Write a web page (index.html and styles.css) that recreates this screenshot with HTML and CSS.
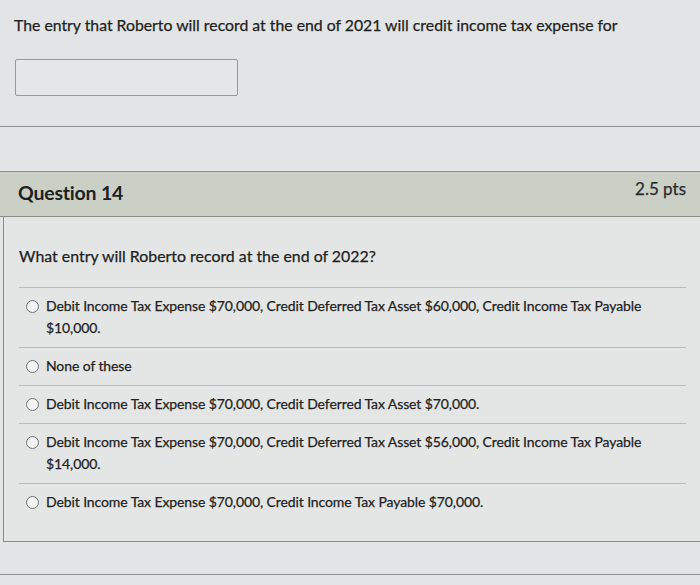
FILE: index.html
```html
<!DOCTYPE html>
<html>
<head>
<meta charset="utf-8">
<link rel="stylesheet" href="styles.css">
</head>
<body>
<div class="prev">
  <p class="prev-text">The entry that Roberto will record at the end of 2021 will credit income tax expense for</p>
  <div class="answer-box"></div>
</div>
<div class="divider"></div>
<div class="card">
  <div class="card-header">
    <span class="q-title">Question 14</span>
    <span class="q-pts">2.5 pts</span>
  </div>
  <div class="card-body">
    <p class="q-text">What entry will Roberto record at the end of 2022?</p>
    <ul class="answers">
      <li class="answer"><span class="radio"></span><span class="a-text">Debit Income Tax Expense $70,000, Credit Deferred Tax Asset $60,000, Credit Income Tax Payable $10,000.</span></li>
      <li class="answer"><span class="radio"></span><span class="a-text">None of these</span></li>
      <li class="answer"><span class="radio"></span><span class="a-text">Debit Income Tax Expense $70,000, Credit Deferred Tax Asset $70,000.</span></li>
      <li class="answer"><span class="radio"></span><span class="a-text">Debit Income Tax Expense $70,000, Credit Deferred Tax Asset $56,000, Credit Income Tax Payable $14,000.</span></li>
      <li class="answer"><span class="radio"></span><span class="a-text">Debit Income Tax Expense $70,000, Credit Income Tax Payable $70,000.</span></li>
    </ul>
  </div>
</div>
<div class="next-line"></div>
</body>
</html>
```
FILE: styles.css
```css
html, body {
  margin: 0;
  padding: 0;
}
body {
  background: #e2e4e6;
  font-family: Lato, "Open Sans", sans-serif;
  color: #1e1f21;
  width: 700px;
  height: 585px;
  overflow: hidden;
  -webkit-text-stroke: 0.25px currentColor;
}
.prev {
  padding: 15px 0 0 14px;
  height: 111px;
  box-sizing: border-box;
}
.prev-text {
  margin: 0;
  font-size: 15.8px;
  line-height: 20px;
}
.answer-box {
  margin: 24px 0 0 1px;
  width: 221px;
  height: 35px;
  border: 1px solid #96989b;
  border-radius: 2px;
  background: #e4e6e8;
}
.divider {
  margin-top: 15px;
  border-top: 1px solid #8d9092;
  height: 44px;
  background: #e3e5e6;
}
.card {
  margin-left: 3px;
  border-left: 1px solid #8a8c8c;
  border-bottom: 1px solid #8a8c8c;
  background: #e4e6e6;
}
.card-header {
  display: flex;
  justify-content: space-between;
  align-items: center;
  height: 44px;
  border-top: 1px solid #8a8e8a;
  border-bottom: 1px solid #8a8e8a;
  margin-left: -4px;
  padding: 0 14px 0 18px;
  background: #cbd0c6;
}
.q-title {
  font-size: 19.5px;
  font-weight: 700;
  letter-spacing: -0.2px;
  -webkit-text-stroke: 0;
  margin-top: -3px;
}
.q-pts {
  font-size: 17px;
  color: #2a2b2d;
  margin-top: -11px;
}
.card-body {
  padding: 29px 14px 20px 15px;
}
.q-text {
  margin: 0;
  font-size: 15.9px;
  line-height: 20px;
}
.answers {
  list-style: none;
  margin: 21px 0 0 0;
  padding: 0;
  border-top: 1px solid #b9bcbe;
}
.answer {
  display: flex;
  align-items: flex-start;
  padding: 7px 0 8px 7px;
  border-bottom: 1px solid #b9bcbe;
  font-size: 14px;
  line-height: 22px;
  letter-spacing: -0.1px;
}
.answer:last-child {
  border-bottom: none;
}
.radio {
  flex: none;
  width: 11px;
  height: 11px;
  border: 1px solid #6f7275;
  border-radius: 50%;
  background: #f2f3f3;
  margin: 5px 7px 0 0;
  -webkit-text-stroke: 0;
}
.a-text {
  flex: 1;
  padding-right: 40px;
}
.next-line {
  margin-top: 32px;
  border-top: 1px solid #8d9092;
}
```
